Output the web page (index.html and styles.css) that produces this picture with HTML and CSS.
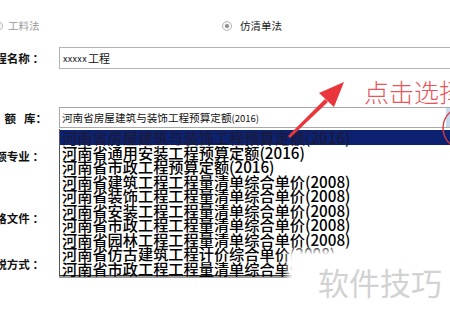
FILE: index.html
```html
<!DOCTYPE html>
<html lang="zh-CN">
<head>
<meta charset="utf-8">
<link rel="stylesheet" href="styles.css">
</head>
<body>
<div class="page">
  <div class="form">
    <div class="radio-row">
      <label class="opt opt-first"><span class="radio"></span><span class="opt-text muted">工料法</span></label>
      <label class="opt"><span class="radio checked"></span><span class="opt-text">仿清单法</span></label>
    </div>
    <div class="row row-name">
      <div class="label">工程名称 ：</div>
      <div class="field input"><span class="x">xxxxx</span>工程</div>
    </div>
    <div class="row row-db">
      <div class="label"><span class="spaced">定额</span>库<span class="colon">：</span></div>
      <div class="field select">河南省房屋建筑与装饰工程预算定额<span class="num">(2016)</span><span class="drop-btn"></span></div>
    </div>
    <div class="row row-l1"><div class="label">定额专业 ：</div></div>
    <div class="row row-l2"><div class="label">价格文件 ：</div></div>
    <div class="row row-l3"><div class="label">计税方式 ：</div></div>
  </div>

  <ul class="dropdown">
    <li class="sel">河南省房屋建筑与装饰工程预算定额(2016)</li>
    <li>河南省通用安装工程预算定额(2016)</li>
    <li>河南省市政工程预算定额(2016)</li>
    <li>河南省建筑工程工程量清单综合单价(2008)</li>
    <li>河南省装饰工程工程量清单综合单价(2008)</li>
    <li>河南省安装工程工程量清单综合单价(2008)</li>
    <li>河南省市政工程工程量清单综合单价(2008)</li>
    <li>河南省园林工程工程量清单综合单价(2008)</li>
    <li>河南省仿古建筑工程计价综合单价(2008)</li>
    <li>河南省市政工程工程量清单综合单价-市政</li>
  </ul>

  <div class="hint">点击选择</div>
  <svg class="marks" width="450" height="316" viewBox="0 0 450 316">
    <path d="M288 136 L325 99 L328 102 L290 138 Z" fill="#e8363c"/>
    <path d="M344 82 L319 93 L334 107 Z" fill="#e8363c"/>
    <ellipse cx="471" cy="128" rx="28" ry="24" fill="none" stroke="#d9363e" stroke-width="1.4"/>
  </svg>

  <div class="wm-cover"></div>
  <div class="watermark">软件技巧</div>
</div>
</body>
</html>
```
FILE: styles.css
```css
* { box-sizing: border-box; }
html, body { margin: 0; padding: 0; }
body {
  background: #fff;
  font-family: "Noto Sans CJK SC", "Noto Sans", sans-serif;
  color: #111;
}
.page {
  position: relative;
  width: 450px;
  height: 316px;
  overflow: hidden;
}
.form {
  display: flex;
  flex-direction: column;
}
.radio-row {
  display: flex;
  align-items: center;
  height: 14px;
  margin-top: 19px;
  font-size: 10.5px;
}
.opt {
  display: flex;
  align-items: center;
  gap: 8px;
}
.opt-first {
  margin-left: -7px;
  width: 229px;
  gap: 5px;
}
.radio {
  width: 10px;
  height: 10px;
  border-radius: 50%;
  border: 1px solid #b8b8b8;
  background: #f4f4f4;
  position: relative;
}
.radio.checked::after {
  content: "";
  position: absolute;
  left: 2px;
  top: 2px;
  width: 4px;
  height: 4px;
  border-radius: 50%;
  background: #8a8a8a;
}
.opt-text { line-height: 14px; color: #222; }
.opt-text.muted { color: #9a9a9a; }

.row {
  display: flex;
  align-items: center;
  gap: 15px;
}
.label {
  width: 44px;
  flex: none;
  display: flex;
  justify-content: flex-end;
  white-space: nowrap;
  font-size: 11.5px;
  font-weight: 700;
  color: #111;
}
.spaced { letter-spacing: 8px; }
.colon { margin-right: -3px; }
.row-name { margin-top: 14px; height: 22px; }
.row-db { margin-top: 38px; height: 21px; }
.row-l1 { margin-top: 21px; height: 14px; }
.row-l2 { margin-top: 48px; height: 14px; }
.row-l3 { margin-top: 32px; height: 14px; }

.field {
  flex: 1;
  height: 100%;
  margin-right: -10px;
  display: flex;
  align-items: center;
  white-space: nowrap;
}
.input {
  border: 1px solid #b4b4b4;
  padding-left: 3px;
  font-size: 11px;
  color: #111;
}
.input .x { font-size: 9px; letter-spacing: 0.3px; margin-right: 1px; }
.select {
  position: relative;
  border: 1px solid #a9a9a9;
  padding-left: 2px;
  font-size: 10.6px;
  color: #111;
}
.select .num { font-size: 9.5px; }
.drop-btn {
  position: absolute;
  left: 386px;
  top: 0;
  width: 20px;
  height: 100%;
  background: #c6dbee;
}

.dropdown {
  position: absolute;
  left: 59px;
  top: 129px;
  width: 400px;
  margin: 0;
  padding: 1px 0 0 0;
  list-style: none;
  background: #fff;
  border-left: 1px solid #555;
  border-bottom: 1px solid #333;
  box-shadow: 0 2px 0 #9a9a9a;
}
.dropdown li {
  height: 14.5px;
  line-height: 14.5px;
  font-size: 15.2px;
  font-weight: 500;
  padding-left: 2px;
  white-space: nowrap;
  color: #000;
}
.dropdown li.sel {
  background: #0c2270;
  color: #1a1a3c;
}

.hint {
  position: absolute;
  left: 364px;
  top: 79px;
  font-size: 25px;
  line-height: 25px;
  font-weight: 300;
  color: #e9545a;
  white-space: nowrap;
}
.marks {
  position: absolute;
  left: 0;
  top: 0;
}
.wm-cover {
  position: absolute;
  left: 292px;
  top: 254px;
  width: 170px;
  height: 80px;
  background: #fff;
  box-shadow: 0 0 6px 4px #fff;
}
.watermark {
  position: absolute;
  left: 318px;
  top: 262px;
  font-size: 31px;
  line-height: 40px;
  color: #d2d2d2;
  white-space: nowrap;
}
```
